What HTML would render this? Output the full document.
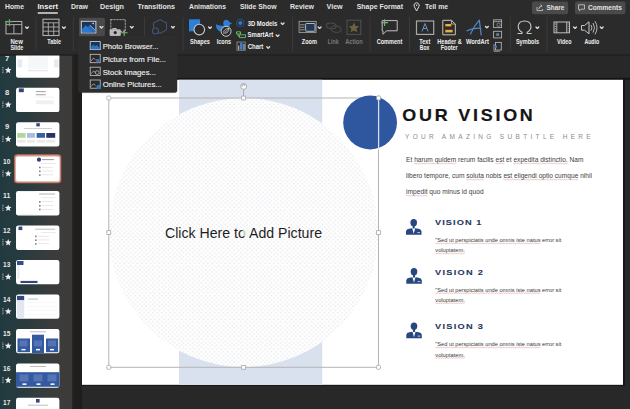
<!DOCTYPE html>
<html><head><meta charset="utf-8">
<style>
*{margin:0;padding:0}
html,body{width:630px;height:409px;overflow:hidden;background:#262626}
svg{position:absolute;left:0;top:0;display:block}
text{font-family:"Liberation Sans",sans-serif}
.tb{font-size:7.8px;font-weight:bold;fill:#e2e2e2}
.lb{font-size:6.4px;font-weight:bold;fill:#f0f0f0}
.mi{font-size:8px;fill:#ececec;stroke:#ececec;stroke-width:0.15px}
.ic{fill:none;stroke:#b4b4b4;stroke-width:1}
.chev{fill:none;stroke:#dedede;stroke-width:1.35;stroke-linecap:round;stroke-linejoin:round}
</style></head><body>
<svg width="630" height="409" viewBox="0 0 630 409">
<defs>
  <linearGradient id="sideg" x1="0" y1="0" x2="1" y2="0">
    <stop offset="0" stop-color="#213a3f"/>
    <stop offset="0.3" stop-color="#283b3e"/>
    <stop offset="0.68" stop-color="#3a3c3c"/>
    <stop offset="1" stop-color="#3d3b39"/>
  </linearGradient>
  <linearGradient id="stripg" x1="0" y1="0" x2="1" y2="0">
    <stop offset="0" stop-color="#262626"/>
    <stop offset="0.3" stop-color="#1f1f1f"/>
    <stop offset="1" stop-color="#1d1d1d"/>
  </linearGradient>
  <pattern id="dots" width="4.4" height="4.3" patternUnits="userSpaceOnUse">
    <rect width="4.4" height="4.3" fill="#ffffff"/>
    <circle cx="1.1" cy="1.07" r="0.8" fill="#e9eaee"/>
    <circle cx="3.3" cy="3.22" r="0.8" fill="#e9eaee"/>
  </pattern>
</defs>

<!-- ===== canvas background ===== -->
<rect x="0" y="0" width="630" height="409" fill="#282828"/>

<!-- ===== slide ===== -->
<rect x="72" y="77.9" width="558" height="1.9" fill="#141414"/>
<rect x="623" y="78" width="1.9" height="308" fill="#161616"/><rect x="82" y="384.8" width="543" height="1.2" fill="#181818"/>
<rect x="82" y="79.8" width="541" height="305" fill="#ffffff"/>
<rect x="179" y="79.8" width="143.2" height="305" fill="#dae1ee"/>
<circle cx="243.6" cy="232.6" r="134.5" fill="url(#dots)"/>
<text x="165" y="238" textLength="157" lengthAdjust="spacingAndGlyphs" style="font-size:14px;fill:#1e1e1e">Click Here to Add Picture</text>
<!-- cursor hint -->
<circle cx="246.5" cy="232.5" r="4.6" fill="#f3f7ec" fill-opacity="0.75"/>
<!-- selection -->
<rect x="108.8" y="98" width="269.7" height="269.3" fill="none" stroke="#b4b4b4" stroke-width="1"/>
<line x1="243.6" y1="89.5" x2="243.6" y2="98" stroke="#9a9a9a" stroke-width="0.8"/>
<circle cx="243.6" cy="86.3" r="3" fill="#ffffff" stroke="#a0a0a0" stroke-width="0.8"/>
<path d="M242.2,86.8 A1.5,1.5 0 1 1 245,86" fill="none" stroke="#606060" stroke-width="0.6"/>
<g fill="#ffffff" stroke="#a8a8a8" stroke-width="0.8">
<rect x="106.8" y="96.0" width="4" height="4" rx="1.2"/>
<rect x="376.5" y="96.0" width="4" height="4" rx="1.2"/>
<rect x="106.8" y="365.3" width="4" height="4" rx="1.2"/>
<rect x="376.5" y="365.3" width="4" height="4" rx="1.2"/>
<rect x="241.7" y="96.1" width="3.8" height="3.8"/>
<rect x="241.7" y="365.4" width="3.8" height="3.8"/>
<rect x="106.9" y="230.7" width="3.8" height="3.8"/>
<rect x="376.6" y="230.7" width="3.8" height="3.8"/>
</g>
<!-- blue circle -->
<circle cx="370.1" cy="122.5" r="26.9" fill="#2f57a0"/>
<line x1="378.6" y1="98" x2="378.6" y2="150" stroke="#d6deee" stroke-width="1.3"/>
<rect x="376.7" y="96.1" width="3.8" height="3.8" rx="0.8" fill="#ffffff" stroke="#a8a8a8" stroke-width="0.7"/>
<!-- title -->
<text transform="translate(402.3,121) scale(1.12,1)" x="0" y="0" textLength="116.5" lengthAdjust="spacing" style="font-size:16px;font-weight:bold;fill:#151515;stroke:#151515;stroke-width:0.2px">OUR VISION</text>
<text x="405" y="139" textLength="189" lengthAdjust="spacingAndGlyphs" style="font-size:6.5px;fill:#8c8c8c;letter-spacing:3.3px">YOUR AMAZING SUBTITLE HERE</text>
<g style="font-size:6.5px;fill:#3c3c3c">
<text x="406.1" y="162.1" textLength="177.3" lengthAdjust="spacingAndGlyphs">Et harum quidem rerum facilis est et expedita distinctio. Nam</text>
<text x="406.1" y="178.2" textLength="185.8" lengthAdjust="spacingAndGlyphs">libero tempore, cum soluta nobis est eligendi optio cumque nihil</text>
<text x="406.1" y="194.3" textLength="77.5" lengthAdjust="spacingAndGlyphs">impedit quo minus id quod</text>
</g>
<!-- vision items -->
<g id="v1">
<ellipse cx="413.7" cy="222.7" rx="3.3" ry="3.7" fill="#27477f"/><rect x="412.7" y="225.5" width="2" height="3" fill="#27477f"/>
<path d="M406,234.7 V231.2 Q406.4,229.2 409,228.8 L412.2,228.2 L413.7,233.8 L415.2,228.2 L418.4,228.8 Q421,229.2 421.5,231.2 V234.7 Z" fill="#27477f"/>
<path d="M417.3,232.6 H420" stroke="#ffffff" stroke-width="0.7"/>
</g>
<text transform="translate(435.0,225.4) scale(1.15,1)" x="0" y="0" textLength="40.4" lengthAdjust="spacing" style="font-size:8px;font-weight:bold;fill:#26375e;stroke:#26375e;stroke-width:0.1px">VISION 1</text>
<g style="font-size:6px;fill:#383838">
<text x="435.3" y="242.2" textLength="126" lengthAdjust="spacingAndGlyphs">"Sed ut perspiciatis unde omnis iste natus error sit</text>
<text x="435.3" y="252.3" textLength="29.5" lengthAdjust="spacingAndGlyphs">voluptatem.</text>
</g>
<g transform="translate(0.3,49)">
<ellipse cx="413.7" cy="222.7" rx="3.3" ry="3.7" fill="#27477f"/><rect x="412.7" y="225.5" width="2" height="3" fill="#27477f"/>
<path d="M406,234.7 V231.2 Q406.4,229.2 409,228.8 L412.2,228.2 L413.7,233.8 L415.2,228.2 L418.4,228.8 Q421,229.2 421.5,231.2 V234.7 Z" fill="#27477f"/>
<path d="M417.3,232.6 H420" stroke="#ffffff" stroke-width="0.7"/>
</g>
<text transform="translate(435.0,275) scale(1.15,1)" x="0" y="0" textLength="41.7" lengthAdjust="spacing" style="font-size:8px;font-weight:bold;fill:#26375e;stroke:#26375e;stroke-width:0.1px">VISION 2</text>
<g style="font-size:6px;fill:#383838">
<text x="435.3" y="292" textLength="126" lengthAdjust="spacingAndGlyphs">"Sed ut perspiciatis unde omnis iste natus error sit</text>
<text x="435.3" y="302" textLength="29.5" lengthAdjust="spacingAndGlyphs">voluptatem.</text>
</g>
<g transform="translate(0.3,103.5)">
<ellipse cx="413.7" cy="222.7" rx="3.3" ry="3.7" fill="#27477f"/><rect x="412.7" y="225.5" width="2" height="3" fill="#27477f"/>
<path d="M406,234.7 V231.2 Q406.4,229.2 409,228.8 L412.2,228.2 L413.7,233.8 L415.2,228.2 L418.4,228.8 Q421,229.2 421.5,231.2 V234.7 Z" fill="#27477f"/>
<path d="M417.3,232.6 H420" stroke="#ffffff" stroke-width="0.7"/>
</g>
<text transform="translate(435.0,329.3) scale(1.15,1)" x="0" y="0" textLength="41.7" lengthAdjust="spacing" style="font-size:8px;font-weight:bold;fill:#26375e;stroke:#26375e;stroke-width:0.1px">VISION 3</text>
<g style="font-size:6px;fill:#383838">
<text x="435.3" y="346.3" textLength="126" lengthAdjust="spacingAndGlyphs">"Sed ut perspiciatis unde omnis iste natus error sit</text>
<text x="435.3" y="356.8" textLength="29.5" lengthAdjust="spacingAndGlyphs">voluptatem.</text>
</g>


<!-- ===== sidebar ===== -->
<rect x="0" y="55.5" width="72" height="354" fill="url(#sideg)"/>
<rect x="72" y="55.5" width="10" height="354" fill="url(#stripg)"/>
<rect x="16" y="53.4" width="43.4" height="24.3" rx="2.2" fill="#ffffff"/>
<text x="5.0" y="60.6" textLength="4.2" lengthAdjust="spacingAndGlyphs" style="font-size:7.7px;font-weight:bold;fill:#e8e8e8">7</text>
<path d="M2.2,67.5 H3.6 M2.2,69.2 H3.6 M2.2,71.0 H3.6 M2.2,72.7 H3.6" stroke="#c8c8c8" stroke-width="0.7"/><path d="M8.20,66.85 L9.13,69.08 L11.53,69.27 L9.70,70.84 L10.26,73.18 L8.20,71.93 L6.14,73.18 L6.70,70.84 L4.87,69.27 L7.27,69.08 Z" fill="#efefef"/>
<rect x="17.5" y="59.4" width="4.5" height="8" fill="#e6eaf3"/>
<rect x="54" y="59.4" width="4.5" height="8" fill="#e6eaf3"/>
<rect x="28" y="56.4" width="20" height="13" fill="#f6f7f9"/>
<rect x="28" y="70.4" width="20" height="0.8" fill="#dadada"/>
<rect x="16" y="87.8" width="43.4" height="24.3" rx="2.2" fill="#ffffff"/>
<text x="5.0" y="95.0" textLength="4.2" lengthAdjust="spacingAndGlyphs" style="font-size:7.7px;font-weight:bold;fill:#e8e8e8">8</text>
<path d="M2.2,101.9 H3.6 M2.2,103.6 H3.6 M2.2,105.4 H3.6 M2.2,107.1 H3.6" stroke="#c8c8c8" stroke-width="0.7"/><path d="M8.20,101.30 L9.13,103.52 L11.53,103.71 L9.70,105.28 L10.26,107.63 L8.20,106.37 L6.14,107.63 L6.70,105.28 L4.87,103.71 L7.27,103.52 Z" fill="#efefef"/>
<rect x="18.8" y="88.4" width="5" height="3.8" fill="#34487e"/>
<rect x="35.8" y="91.3" width="10" height="0.8" fill="#8a8a8a"/>
<rect x="35.8" y="94.4" width="10" height="0.8" fill="#8a8a8a"/>
<rect x="35.8" y="96.8" width="18" height="0.5" fill="#e0e0e0"/>
<rect x="35.8" y="100.3" width="18" height="4" fill="#f0f0f0"/>
<rect x="16" y="122.2" width="43.4" height="24.3" rx="2.2" fill="#ffffff"/>
<text x="5.0" y="129.4" textLength="4.2" lengthAdjust="spacingAndGlyphs" style="font-size:7.7px;font-weight:bold;fill:#e8e8e8">9</text>
<path d="M2.2,136.3 H3.6 M2.2,138.0 H3.6 M2.2,139.8 H3.6 M2.2,141.5 H3.6" stroke="#c8c8c8" stroke-width="0.7"/><path d="M8.20,135.74 L9.13,137.97 L11.53,138.16 L9.70,139.73 L10.26,142.07 L8.20,140.82 L6.14,142.07 L6.70,139.73 L4.87,138.16 L7.27,137.97 Z" fill="#efefef"/>
<rect x="36.3" y="123.2" width="3.5" height="3.2" fill="#34487e"/>
<rect x="24" y="128.4" width="28" height="0.6" fill="#b0b0b0"/>
<rect x="17.2" y="133.0" width="8.4" height="4.8" fill="#b3d69c"/>
<rect x="17.2" y="139.7" width="8.4" height="3" fill="#ececec"/>
<rect x="27" y="133.0" width="8.0" height="4.8" fill="#a8bde3"/>
<rect x="27" y="139.7" width="8.0" height="3" fill="#ececec"/>
<rect x="36.6" y="133.0" width="8.4" height="4.8" fill="#3a60a0"/>
<rect x="36.6" y="139.7" width="8.4" height="3" fill="#ececec"/>
<rect x="46.3" y="133.0" width="8.9" height="4.8" fill="#27336a"/>
<rect x="46.3" y="139.7" width="8.9" height="3" fill="#ececec"/>
<rect x="13.6" y="153.8" width="48.199999999999996" height="29.9" rx="3.8" fill="#4a3430"/>
<rect x="14.1" y="154.3" width="47.199999999999996" height="28.9" rx="3.3" fill="#b77364"/>
<rect x="15.2" y="155.5" width="45.0" height="26.7" rx="2.6" fill="#e4bdb3"/>
<rect x="16" y="156.7" width="43.4" height="24.3" rx="2.2" fill="#ffffff"/>
<text x="3.0" y="163.9" textLength="7.3" lengthAdjust="spacingAndGlyphs" style="font-size:7.7px;font-weight:bold;fill:#e8e8e8">10</text>
<path d="M2.2,170.8 H3.6 M2.2,172.5 H3.6 M2.2,174.3 H3.6 M2.2,176.0 H3.6" stroke="#c8c8c8" stroke-width="0.7"/><path d="M8.20,170.19 L9.13,172.41 L11.53,172.60 L9.70,174.17 L10.26,176.52 L8.20,175.26 L6.14,176.52 L6.70,174.17 L4.87,172.60 L7.27,172.41 Z" fill="#efefef"/>
<circle cx="39" cy="159.7" r="2.1" fill="#2a4078"/>
<rect x="42" y="159.2" width="12" height="0.9" fill="#909090"/>
<rect x="41" y="163.2" width="15" height="0.5" fill="#d4d4d4"/>
<rect x="39" y="166.7" width="1.6" height="1.6" fill="#808080"/>
<rect x="42" y="167.0" width="11" height="0.5" fill="#d0d0d0"/>
<rect x="39" y="170.5" width="1.6" height="1.6" fill="#808080"/>
<rect x="42" y="170.8" width="11" height="0.5" fill="#d0d0d0"/>
<rect x="39" y="174.3" width="1.6" height="1.6" fill="#808080"/>
<rect x="42" y="174.6" width="11" height="0.5" fill="#d0d0d0"/>
<rect x="16" y="191.1" width="43.4" height="24.3" rx="2.2" fill="#ffffff"/>
<text x="3.0" y="198.3" textLength="7.3" lengthAdjust="spacingAndGlyphs" style="font-size:7.7px;font-weight:bold;fill:#e8e8e8">11</text>
<path d="M2.2,205.2 H3.6 M2.2,206.9 H3.6 M2.2,208.7 H3.6 M2.2,210.4 H3.6" stroke="#c8c8c8" stroke-width="0.7"/><path d="M8.20,204.63 L9.13,206.86 L11.53,207.05 L9.70,208.62 L10.26,210.96 L8.20,209.70 L6.14,210.96 L6.70,208.62 L4.87,207.05 L7.27,206.86 Z" fill="#efefef"/>
<rect x="39" y="193.6" width="16" height="0.8" fill="#a0a0a0"/>
<rect x="20" y="191.4" width="16" height="0.6" fill="#e4e8f0"/>
<rect x="20" y="214.5" width="16" height="0.6" fill="#e4e8f0"/>
<rect x="41" y="197.6" width="15" height="0.5" fill="#d4d4d4"/>
<rect x="39" y="201.1" width="1.6" height="1.6" fill="#808080"/>
<rect x="42" y="201.4" width="11" height="0.5" fill="#d0d0d0"/>
<rect x="39" y="204.9" width="1.6" height="1.6" fill="#808080"/>
<rect x="42" y="205.2" width="11" height="0.5" fill="#d0d0d0"/>
<rect x="39" y="208.7" width="1.6" height="1.6" fill="#808080"/>
<rect x="42" y="209.0" width="11" height="0.5" fill="#d0d0d0"/>
<rect x="16" y="225.6" width="43.4" height="24.3" rx="2.2" fill="#ffffff"/>
<text x="3.0" y="232.8" textLength="7.3" lengthAdjust="spacingAndGlyphs" style="font-size:7.7px;font-weight:bold;fill:#e8e8e8">12</text>
<path d="M2.2,239.7 H3.6 M2.2,241.4 H3.6 M2.2,243.2 H3.6 M2.2,244.9 H3.6" stroke="#c8c8c8" stroke-width="0.7"/><path d="M8.20,239.07 L9.13,241.30 L11.53,241.49 L9.70,243.06 L10.26,245.41 L8.20,244.15 L6.14,245.41 L6.70,243.06 L4.87,241.49 L7.27,241.30 Z" fill="#efefef"/>
<rect x="18.5" y="226.6" width="3.8" height="3.5" fill="#34487e"/>
<rect x="35" y="228.8" width="20" height="0.7" fill="#a0a0a0"/>
<rect x="41" y="232.1" width="15" height="0.5" fill="#d4d4d4"/>
<rect x="35" y="235.6" width="1.6" height="1.6" fill="#808080"/>
<rect x="38" y="235.9" width="11" height="0.5" fill="#d0d0d0"/>
<rect x="35" y="239.4" width="1.6" height="1.6" fill="#808080"/>
<rect x="38" y="239.7" width="11" height="0.5" fill="#d0d0d0"/>
<rect x="35" y="243.2" width="1.6" height="1.6" fill="#808080"/>
<rect x="38" y="243.5" width="11" height="0.5" fill="#d0d0d0"/>
<rect x="16" y="260.0" width="43.4" height="24.3" rx="2.2" fill="#ffffff"/>
<text x="3.0" y="267.2" textLength="7.3" lengthAdjust="spacingAndGlyphs" style="font-size:7.7px;font-weight:bold;fill:#e8e8e8">13</text>
<path d="M2.2,274.1 H3.6 M2.2,275.8 H3.6 M2.2,277.6 H3.6 M2.2,279.3 H3.6" stroke="#c8c8c8" stroke-width="0.7"/><path d="M8.20,273.52 L9.13,275.74 L11.53,275.94 L9.70,277.51 L10.26,279.85 L8.20,278.59 L6.14,279.85 L6.70,277.51 L4.87,275.94 L7.27,275.74 Z" fill="#efefef"/>
<rect x="17" y="261.0" width="6.5" height="4" fill="#2f4f92"/>
<rect x="17.5" y="265.0" width="2" height="14" fill="#e8ecf3"/>
<rect x="20.5" y="280.9" width="17" height="2.1" fill="#34457a"/>
<rect x="16" y="294.5" width="43.4" height="24.3" rx="2.2" fill="#ffffff"/>
<text x="3.0" y="301.7" textLength="7.3" lengthAdjust="spacingAndGlyphs" style="font-size:7.7px;font-weight:bold;fill:#e8e8e8">14</text>
<path d="M2.2,308.6 H3.6 M2.2,310.3 H3.6 M2.2,312.1 H3.6 M2.2,313.8 H3.6" stroke="#c8c8c8" stroke-width="0.7"/><path d="M8.20,307.96 L9.13,310.19 L11.53,310.38 L9.70,311.95 L10.26,314.29 L8.20,313.04 L6.14,314.29 L6.70,311.95 L4.87,310.38 L7.27,310.19 Z" fill="#efefef"/>
<rect x="17" y="295.9" width="7.2" height="4.4" fill="#34487e"/>
<rect x="17" y="300.3" width="7.2" height="17.5" fill="#e2e8f2"/>
<rect x="28" y="298.7" width="10" height="0.7" fill="#a0a0a0"/>
<rect x="27" y="302.5" width="30" height="0.4" fill="#eeeeee"/>
<rect x="27" y="306.5" width="30" height="0.4" fill="#eeeeee"/>
<rect x="27" y="310.5" width="30" height="0.4" fill="#eeeeee"/>
<rect x="27" y="314.5" width="30" height="0.4" fill="#eeeeee"/>
<rect x="16" y="328.9" width="43.4" height="24.3" rx="2.2" fill="#ffffff"/>
<text x="3.0" y="336.1" textLength="7.3" lengthAdjust="spacingAndGlyphs" style="font-size:7.7px;font-weight:bold;fill:#e8e8e8">15</text>
<path d="M2.2,343.0 H3.6 M2.2,344.7 H3.6 M2.2,346.5 H3.6 M2.2,348.2 H3.6" stroke="#c8c8c8" stroke-width="0.7"/><path d="M8.20,342.41 L9.13,344.63 L11.53,344.83 L9.70,346.39 L10.26,348.74 L8.20,347.48 L6.14,348.74 L6.70,346.39 L4.87,344.83 L7.27,344.63 Z" fill="#efefef"/>
<rect x="30" y="331.5" width="16" height="0.7" fill="#a0a0a0"/>
<rect x="17.5" y="338.5" width="12.5" height="13.7" fill="#3359a0"/>
<rect x="32" y="334.7" width="12" height="18.4" fill="#3359a0"/>
<rect x="46" y="338.5" width="12.2" height="13.7" fill="#3359a0"/>
<rect x="19.5" y="340.4" width="8" height="6" fill="#5574b4"/>
<rect x="21.5" y="348.9" width="4" height="1.5" fill="#ffffff"/>
<rect x="34" y="340.4" width="8" height="6" fill="#5574b4"/>
<rect x="36" y="348.9" width="4" height="1.5" fill="#ffffff"/>
<rect x="48" y="340.4" width="8" height="6" fill="#5574b4"/>
<rect x="50" y="348.9" width="4" height="1.5" fill="#ffffff"/>
<rect x="16" y="363.4" width="43.4" height="24.3" rx="2.2" fill="#ffffff"/>
<text x="3.0" y="370.6" textLength="7.3" lengthAdjust="spacingAndGlyphs" style="font-size:7.7px;font-weight:bold;fill:#e8e8e8">16</text>
<path d="M2.2,377.5 H3.6 M2.2,379.2 H3.6 M2.2,381.0 H3.6 M2.2,382.7 H3.6" stroke="#c8c8c8" stroke-width="0.7"/><path d="M8.20,376.85 L9.13,379.08 L11.53,379.27 L9.70,380.84 L10.26,383.18 L8.20,381.93 L6.14,383.18 L6.70,380.84 L4.87,379.27 L7.27,379.08 Z" fill="#efefef"/>
<rect x="30" y="366.2" width="16" height="0.7" fill="#a0a0a0"/>
<rect x="16" y="372.2" width="43.4" height="14.6" fill="#3359a0"/>
<rect x="19.5" y="374.4" width="9" height="7" fill="#5574b4"/>
<rect x="22.5" y="383.4" width="4" height="1.5" fill="#ffffff"/>
<rect x="33.5" y="374.4" width="9" height="7" fill="#5574b4"/>
<rect x="36.5" y="383.4" width="4" height="1.5" fill="#ffffff"/>
<rect x="47.5" y="374.4" width="9" height="7" fill="#5574b4"/>
<rect x="50.5" y="383.4" width="4" height="1.5" fill="#ffffff"/>
<rect x="16" y="397.8" width="43.4" height="24.3" rx="2.2" fill="#ffffff"/>
<text x="3.0" y="405.0" textLength="7.3" lengthAdjust="spacingAndGlyphs" style="font-size:7.7px;font-weight:bold;fill:#e8e8e8">17</text>
<path d="M2.2,411.9 H3.6 M2.2,413.6 H3.6 M2.2,415.4 H3.6 M2.2,417.1 H3.6" stroke="#c8c8c8" stroke-width="0.7"/><path d="M8.20,411.30 L9.13,413.52 L11.53,413.71 L9.70,415.28 L10.26,417.63 L8.20,416.37 L6.14,417.63 L6.70,415.28 L4.87,413.71 L7.27,413.52 Z" fill="#efefef"/>
<rect x="36" y="399.0" width="3.6" height="3.6" fill="#34487e"/>
<rect x="28" y="404.8" width="20" height="0.7" fill="#a0a0a0"/>
<!-- ===== ribbon ===== -->
<rect x="0" y="0" width="630" height="55" fill="#2b2b2b"/>
<rect x="0" y="54.5" width="630" height="1" fill="#1b1b1b"/>

<!-- tabs -->
<text class="tb" x="5" y="9" textLength="19" lengthAdjust="spacingAndGlyphs">Home</text>
<text class="tb" x="37.5" y="9" textLength="20.5" lengthAdjust="spacingAndGlyphs" style="fill:#f2f2f2">Insert</text>
<rect x="37.5" y="12.2" width="20.5" height="1.6" rx="0.8" fill="#e0e0e0"/>
<text class="tb" x="71" y="9" textLength="17" lengthAdjust="spacingAndGlyphs">Draw</text>
<text class="tb" x="100" y="9" textLength="24" lengthAdjust="spacingAndGlyphs">Design</text>
<text class="tb" x="137.5" y="9" textLength="37.5" lengthAdjust="spacingAndGlyphs">Transitions</text>
<text class="tb" x="189" y="9" textLength="37" lengthAdjust="spacingAndGlyphs">Animations</text>
<text class="tb" x="240" y="9" textLength="36.5" lengthAdjust="spacingAndGlyphs">Slide Show</text>
<text class="tb" x="290" y="9" textLength="24" lengthAdjust="spacingAndGlyphs">Review</text>
<text class="tb" x="326.5" y="9" textLength="16.2" lengthAdjust="spacingAndGlyphs">View</text>
<text class="tb" x="356.7" y="9" textLength="46.3" lengthAdjust="spacingAndGlyphs">Shape Format</text>
<!-- pin -->
<path d="M416.6,11 L414.4,6.8 A2.6,2.6 0 1 1 418.8,6.8 Z" fill="none" stroke="#d8d8d8" stroke-width="1"/>
<circle cx="416.6" cy="5.3" r="0.8" fill="#d8d8d8"/>
<text class="tb" x="425" y="9" textLength="23" lengthAdjust="spacingAndGlyphs">Tell me</text>

<!-- share / comments -->
<rect x="532" y="1.4" width="36.1" height="12.8" rx="2" fill="#4a4a4a"/>
<path d="M537,7 V10.6 H542.6 V9 M538.8,9.2 Q539,6 541.8,5.8 M540.6,4.6 L542,5.8 L540.6,7" fill="none" stroke="#d0d0d0" stroke-width="0.8"/>
<text class="tb" x="546.6" y="10.2" textLength="17.8" lengthAdjust="spacingAndGlyphs" style="font-size:6.6px">Share</text>
<rect x="575" y="1.4" width="50.4" height="12.8" rx="2" fill="#4a4a4a"/>
<path d="M578.5,4.8 H584.5 V9.2 H581 L579.4,10.8 V9.2 H578.5 Z" fill="none" stroke="#d0d0d0" stroke-width="0.8"/>
<text class="tb" x="587.9" y="10.2" textLength="34" lengthAdjust="spacingAndGlyphs" style="font-size:6.6px">Comments</text>

<!-- separators -->
<g fill="#3a3a3a">
<rect x="35.5" y="17" width="1" height="34"/>
<rect x="72.8" y="17" width="1" height="34"/>
<rect x="144" y="17" width="1" height="34"/>
<rect x="182.5" y="17" width="1" height="34"/>
<rect x="292" y="17" width="1" height="34"/>
<rect x="369.5" y="17" width="1" height="34"/>
<rect x="409" y="17" width="1" height="34"/>
<rect x="509.8" y="17" width="1" height="34"/>
<rect x="546.5" y="17" width="1" height="34"/>
</g>

<!-- New Slide icon -->
<rect x="6" y="21.5" width="15.8" height="12.3" fill="#262626" stroke="#a8a8a8" stroke-width="1.1"/>
<line x1="6" y1="24.6" x2="21.8" y2="24.6" stroke="#a8a8a8" stroke-width="1"/>
<line x1="13.9" y1="24.6" x2="13.9" y2="33.8" stroke="#a8a8a8" stroke-width="1"/>
<path d="M9.4,19 V26.2 M5.2,21.8 H12.8" stroke="#5fae5f" stroke-width="1.1"/>
<path class="chev" d="M25.6,27 L27,28.4 L28.4,27"/>
<!-- Table icon -->
<rect x="43" y="19.2" width="16" height="16.3" fill="#262626" stroke="#b0b0b0" stroke-width="1.1"/>
<path d="M43,22.8 H59 M43,27 H59 M43,31.2 H59 M48.3,22.8 V35.5 M53.7,22.8 V35.5" stroke="#b0b0b0" stroke-width="0.9"/>
<path class="chev" d="M62.5,27 L63.9,28.4 L65.3,27"/>
<text class="lb" x="10.5" y="44" textLength="12.3" lengthAdjust="spacingAndGlyphs">New</text>
<text class="lb" x="10.5" y="50" textLength="12.8" lengthAdjust="spacingAndGlyphs">Slide</text>
<text class="lb" x="47.2" y="44" textLength="13.9" lengthAdjust="spacingAndGlyphs">Table</text>

<!-- Pictures (highlighted) -->
<rect x="79" y="17.8" width="25.9" height="18.6" rx="1.5" fill="#4a4a4a"/>
<rect x="81.3" y="21.3" width="14.6" height="11.6" fill="#1e3552" stroke="#d4dce8" stroke-width="0.9"/>
<path d="M81.8,32.4 V29.6 L85.8,25.2 L93.5,32.4 Z" fill="#2a78d2"/>
<path d="M87.5,27 L89.8,25.2 L95.4,30.2 V32.4 H93.5 Z" fill="#2a6cbc"/>
<path d="M89.8,25.2 L95.4,30.2" fill="none" stroke="#a8c8ea" stroke-width="0.7"/>
<path d="M91.6,23.2 L93.6,22.4 L94.4,24.6 Z" fill="#d8d0c0"/>
<path class="chev" d="M100,26.6 L101.4,28 L102.8,26.6"/>
<!-- Screenshot -->
<rect x="110.8" y="19.6" width="14.5" height="11.8" fill="none" stroke="#a8a8a8" stroke-width="1" stroke-dasharray="1.4,1.6" stroke-linecap="round"/>
<rect x="109.6" y="29.2" width="11.2" height="6.8" rx="1" fill="#b8b8b8"/>
<rect x="112.4" y="28" width="4.2" height="1.6" fill="#b8b8b8"/>
<circle cx="115.2" cy="32.6" r="1.9" fill="#1e1e1e" stroke="#e0e0e0" stroke-width="0.5"/>
<path d="M124.2,29.4 V36.2 M120.8,32.8 H127.6" stroke="#79b879" stroke-width="1.1"/>
<path class="chev" d="M130.4,26.6 L131.8,28 L133.2,26.6"/>
<!-- hexagon dim -->
<path d="M160,19.5 L166.5,23 L166.5,30 L160,33.5 L153.5,30 L153.5,23 Z" fill="none" stroke="#3e5678" stroke-width="1.1"/>
<circle cx="155.5" cy="31" r="3" fill="#2b2b2b" stroke="#3e5678" stroke-width="1.1"/>
<path class="chev" d="M171.5,26.6 L172.9,28 L174.3,26.6"/>

<!-- Shapes -->
<rect x="189" y="19.3" width="11.1" height="12" fill="#2d7fd8"/>
<circle cx="199.3" cy="29.6" r="5.3" fill="#2b2b2b" stroke="#c8c8c8" stroke-width="1.1"/>
<path class="chev" d="M208.6,27 L210,28.4 L211.4,27"/>
<text class="lb" x="190" y="44" textLength="20" lengthAdjust="spacingAndGlyphs">Shapes</text>
<!-- Icons -->
<path d="M215.8,24.2 Q216.3,31.7 222.5,31.7 Q227.5,31.7 229.2,27.3 Q229.8,25.8 229.6,24.8 L232.2,23.3 L229.6,22.3 Q228.8,19.7 226.3,19.7 Q223.3,19.9 223.2,23 Q223.2,24.6 224,25.8 Q220,26.2 215.8,24.2 Z" fill="#2d7fd8"/>
<circle cx="226.1" cy="31.3" r="5" fill="#2b2b2b" stroke="#c8c8c8" stroke-width="1"/>
<path d="M222.8,34.6 L229,28.4 M223.5,32.5 Q224,28.8 229,28.4 Q228.8,33 225,33.2" fill="none" stroke="#c8c8c8" stroke-width="0.8"/>
<text class="lb" x="216.8" y="44" textLength="14.2" lengthAdjust="spacingAndGlyphs">Icons</text>
<!-- 3D models / SmartArt / Chart -->
<circle cx="240.3" cy="23" r="3.8" fill="#1a2b44" stroke="#34557f" stroke-width="0.9"/>
<path d="M240.3,20.8 L242.2,21.9 L242.2,24.1 L240.3,25.2 L238.4,24.1 L238.4,21.9 Z" fill="#3f74b8"/>
<text class="lb" x="247.7" y="25.5" textLength="29.5" lengthAdjust="spacingAndGlyphs">3D Models</text>
<path class="chev" d="M281.2,23 L282.6,24.4 L284,23"/>
<path d="M236.5,31.8 H240.5 V34 H236.5 Z M239.5,34.8 H245.5 V37.6 H239.5 Z" fill="#2b2b2b" stroke="#6cbf6c" stroke-width="0.9"/>
<path d="M238,34 V36.2 H239.5" fill="none" stroke="#6cbf6c" stroke-width="0.8"/>
<text class="lb" x="247.6" y="37.4" textLength="25.7" lengthAdjust="spacingAndGlyphs">SmartArt</text>
<path class="chev" d="M276.2,35 L277.6,36.4 L279,35"/>
<rect x="237" y="42" width="8.2" height="8.2" fill="none" stroke="#9a9a9a" stroke-width="0.8"/>
<rect x="240" y="42.8" width="2.6" height="6.8" fill="#3f7fd0"/>
<rect x="238" y="45.5" width="1.3" height="4.2" fill="#a8a8a8"/>
<rect x="243.3" y="44" width="1.3" height="5.7" fill="#a8a8a8"/>
<text class="lb" x="247.7" y="49" textLength="15.7" lengthAdjust="spacingAndGlyphs">Chart</text>
<path class="chev" d="M266.8,46.8 L268.2,48.2 L269.6,46.8"/>

<!-- Zoom -->
<rect x="299.1" y="21.4" width="17" height="11" fill="#2b2b2b" stroke="#a0a0a0" stroke-width="0.9"/>
<rect x="305.6" y="23.5" width="9.4" height="7.8" rx="0.8" fill="#24384f" stroke="#b4c8e2" stroke-width="0.9"/>
<rect x="300" y="24.2" width="4.6" height="1.1" fill="#8a8a8a"/>
<rect x="300" y="26.7" width="4.6" height="1.1" fill="#8a8a8a"/>
<rect x="300" y="29.2" width="4.6" height="1.1" fill="#8a8a8a"/>
<path class="chev" d="M318.2,27 L319.6,28.4 L321,27"/>
<text class="lb" x="301.8" y="44" textLength="15.2" lengthAdjust="spacingAndGlyphs">Zoom</text>
<!-- Link dim -->
<g fill="none" stroke="#4e4e4e" stroke-width="1">
<ellipse cx="331.2" cy="25.8" rx="5" ry="2.8" transform="rotate(8 331.2 25.8)"/>
<ellipse cx="336" cy="29.1" rx="5.2" ry="3.2" transform="rotate(8 336 29.1)"/>
</g>
<text class="lb" x="327.7" y="44" textLength="10.9" lengthAdjust="spacingAndGlyphs" style="fill:#7a7a7a">Link</text>
<!-- Action dim -->
<rect x="347" y="20.2" width="13.8" height="14.2" fill="none" stroke="#505050" stroke-width="1"/>
<path d="M353.9,22.6 L355.5,26 L359.1,26.3 L356.4,28.7 L357.2,32.2 L353.9,30.4 L350.6,32.2 L351.4,28.7 L348.7,26.3 L352.3,26 Z" fill="#6e6040"/>
<text class="lb" x="345.2" y="44" textLength="17.6" lengthAdjust="spacingAndGlyphs" style="fill:#7a7a7a">Action</text>

<!-- Comment -->
<path d="M382.2,20.6 H397.2 V30.8 H386.5 L383,34.3 V30.8 H382.2 Z" fill="none" stroke="#c0c0c0" stroke-width="1"/>
<path d="M384.6,19.2 V26 M381.2,22.6 H388" stroke="#72b872" stroke-width="1.1"/>
<text class="lb" x="376.7" y="44" textLength="25.7" lengthAdjust="spacingAndGlyphs">Comment</text>

<!-- Text Box -->
<rect x="416.5" y="21" width="17.2" height="13.4" fill="#2a2a2a" stroke="#a8a8a8" stroke-width="1.2"/>
<path d="M422,31.5 L425,23.5 L428,31.5 M423.2,28.5 H426.8" fill="none" stroke="#6a94cc" stroke-width="1"/>
<text class="lb" x="419.3" y="44" textLength="11" lengthAdjust="spacingAndGlyphs">Text</text>
<text class="lb" x="419.8" y="50.3" textLength="9.6" lengthAdjust="spacingAndGlyphs">Box</text>
<!-- Header & Footer -->
<path d="M442.8,20.3 H451.5 L455.3,24 V34.8 H442.8 Z" fill="#2a2a2a" stroke="#cfc6b6" stroke-width="1"/>
<path d="M451.5,20.3 V24 H455.3" fill="none" stroke="#cfc6b6" stroke-width="0.8"/>
<rect x="445.3" y="24" width="6" height="2.4" fill="#e8ad48"/>
<rect x="445.3" y="29.8" width="7.3" height="2.6" fill="#e8ad48"/>
<text class="lb" x="437.3" y="44" textLength="24.4" lengthAdjust="spacingAndGlyphs">Header &amp;</text>
<text class="lb" x="440.8" y="50.3" textLength="16.9" lengthAdjust="spacingAndGlyphs">Footer</text>
<!-- WordArt -->
<path d="M470.5,34 Q474,26 479.3,20.2 L481.2,34.8 M467,30.8 Q473,27.6 480.8,28.3" fill="none" stroke="#5288cc" stroke-width="1.2" stroke-linecap="round" stroke-linejoin="round"/>
<path class="chev" d="M485.5,26.4 L486.9,27.8 L488.3,26.4"/>
<text class="lb" x="466" y="44" textLength="22.8" lengthAdjust="spacingAndGlyphs">WordArt</text>
<!-- small column icons -->
<rect x="493.6" y="19.8" width="8" height="7.8" fill="#2b2b2b" stroke="#b0b0b0" stroke-width="0.9"/>
<path d="M493.6,21.6 H501.6" stroke="#b0b0b0" stroke-width="0.8"/>
<circle cx="498.6" cy="24.8" r="1.7" fill="none" stroke="#8aa0c0" stroke-width="0.7"/>
<rect x="493.6" y="31.3" width="8" height="6.6" fill="#2b2b2b" stroke="#b0b0b0" stroke-width="0.9"/>
<rect x="496.3" y="33.4" width="2.8" height="2.4" fill="#6a88b0"/>
<rect x="495.5" y="42.4" width="5.8" height="7.6" fill="#2b2b2b" stroke="#b0b0b0" stroke-width="0.9"/>
<path d="M494,44.2 V51.3 H499.8" fill="none" stroke="#b0b0b0" stroke-width="0.8"/>
<rect x="494.4" y="45.6" width="2.6" height="2.2" fill="#3f74b8"/>

<!-- Symbols -->
<path d="M517.5,33.5 H522 V32.3 Q518.2,30.2 518.2,26.5 Q518.5,21 524.6,21 Q530.7,21 531,26.5 Q531,30.2 527.2,32.3 V33.5 H531.7" fill="none" stroke="#c8c8c8" stroke-width="1.1"/>
<path class="chev" d="M536,27 L537.4,28.4 L538.8,27"/>
<text class="lb" x="515.9" y="44.2" textLength="23.2" lengthAdjust="spacingAndGlyphs">Symbols</text>
<!-- Video -->
<rect x="554" y="22" width="15.5" height="10.8" fill="#2b2b2b" stroke="#c0c0c0" stroke-width="1"/>
<path d="M556.8,22 V32.8 M566.7,22 V32.8" stroke="#c0c0c0" stroke-width="0.9"/>
<path d="M554.8,24 H556 M554.8,26.4 H556 M554.8,28.8 H556 M554.8,31 H556 M567.5,24 H568.7 M567.5,26.4 H568.7 M567.5,28.8 H568.7 M567.5,31 H568.7" stroke="#c0c0c0" stroke-width="0.8"/>
<path class="chev" d="M573.6,27 L575,28.4 L576.4,27"/>
<text class="lb" x="557" y="44.2" textLength="14.5" lengthAdjust="spacingAndGlyphs">Video</text>
<!-- Audio -->
<path d="M581.5,25.5 H584.5 L589,21.8 V33.8 L584.5,30.2 H581.5 Z" fill="none" stroke="#c8c8c8" stroke-width="1"/>
<path d="M591,25 Q592.8,27.8 591,30.6 M593,23 Q596,27.8 593,32.6 M595,21.2 Q599,27.8 595,34.4" fill="none" stroke="#c8c8c8" stroke-width="0.9"/>
<path class="chev" d="M600.3,27 L601.7,28.4 L603.1,27"/>
<text class="lb" x="584.4" y="44.2" textLength="14.8" lengthAdjust="spacingAndGlyphs">Audio</text>

<path d="M414.1,163.15 L415.0,163.85 L415.9,163.15 L416.8,163.85 L417.7,163.15 L418.6,163.85 L419.5,163.15 L420.4,163.85 L421.3,163.15 L422.2,163.85 L423.1,163.15 L424.0,163.85 L424.9,163.15 L425.8,163.85 L426.7,163.15 L427.6,163.85 L428.5,163.15 L429.4,163.85 L430.3,163.15 L431.2,163.85 L432.1,163.15 L433.0,163.85 L433.9,163.15 L434.8,163.85 L435.7,163.15 L436.6,163.85 L437.5,163.15 L438.4,163.85 L439.3,163.15 L440.2,163.85 L441.1,163.15 L442.0,163.85 L442.9,163.15 L443.8,163.85 L444.7,163.15 L445.6,163.85 L446.5,163.15 L447.4,163.85 L448.3,163.15 L449.2,163.85 L450.1,163.15 L451.0,163.85 L451.9,163.15 L452.8,163.85 L453.7,163.15 L454.6,163.85 L455.5,163.15 L456.3,163.50 M495.5,163.15 L496.4,163.85 L497.3,163.15 L498.2,163.85 L499.1,163.15 L500.0,163.85 L500.9,163.15 L501.8,163.85 L502.7,163.15 L503.6,163.85 L504.3,163.50 M513.4,163.15 L514.3,163.85 L515.2,163.15 L516.1,163.85 L517.0,163.15 L517.9,163.85 L518.8,163.15 L519.7,163.85 L520.6,163.15 L521.5,163.85 L522.4,163.15 L523.3,163.85 L524.2,163.15 L525.1,163.85 L526.0,163.15 L526.9,163.85 L527.8,163.15 L528.7,163.85 L529.6,163.15 L530.5,163.85 L531.4,163.15 L532.3,163.85 L533.2,163.15 L534.1,163.85 L535.0,163.15 L535.9,163.85 L536.8,163.15 L537.7,163.85 L538.6,163.15 L539.5,163.85 L540.4,163.15 L541.3,163.85 L542.2,163.15 L543.1,163.85 L544.0,163.15 L544.9,163.85 L545.8,163.15 L546.7,163.85 L547.6,163.15 L548.5,163.85 L549.4,163.15 L550.3,163.85 L551.2,163.15 L552.1,163.85 L553.0,163.15 L553.9,163.85 L554.8,163.15 L555.7,163.85 L556.6,163.15 L557.5,163.85 L558.4,163.15 L559.3,163.85 L560.2,163.15 L561.1,163.85 L562.0,163.15 L562.9,163.85 L563.8,163.15 L564.7,163.85 L565.6,163.15 L566.5,163.85 L567.4,163.15 L567.7,163.50 M466.3,179.25 L467.2,179.95 L468.1,179.25 L469.0,179.95 L469.9,179.25 L470.8,179.95 L471.7,179.25 L472.6,179.95 L473.5,179.25 L474.4,179.95 L475.3,179.25 L476.2,179.95 L477.1,179.25 L478.0,179.95 L478.9,179.25 L479.8,179.95 L480.7,179.25 L481.6,179.95 L482.5,179.25 L483.4,179.95 L483.9,179.60 M503.4,179.25 L504.3,179.95 L505.2,179.25 L506.1,179.95 L507.0,179.25 L507.9,179.95 L508.8,179.25 L509.7,179.95 L510.6,179.25 L511.5,179.95 L512.4,179.25 L513.3,179.95 L514.2,179.25 L515.1,179.95 L516.0,179.25 L516.9,179.95 L517.8,179.25 L518.7,179.95 L519.6,179.25 L520.5,179.95 L521.4,179.25 L522.3,179.95 L523.2,179.25 L524.1,179.95 L525.0,179.25 L525.9,179.95 L526.8,179.25 L527.7,179.95 L528.6,179.25 L529.5,179.95 L530.4,179.25 L531.3,179.95 L532.2,179.25 L533.1,179.95 L534.0,179.25 L534.9,179.95 L535.8,179.25 L536.7,179.95 L537.6,179.25 L538.5,179.95 L539.4,179.25 L540.3,179.95 L541.2,179.25 L542.1,179.95 L543.0,179.25 L543.9,179.95 L544.8,179.25 L545.7,179.95 L546.6,179.25 L547.5,179.95 L548.4,179.25 L549.3,179.95 L550.2,179.25 L551.1,179.95 L552.0,179.25 L552.9,179.95 L553.8,179.25 L554.7,179.95 L555.6,179.25 L556.5,179.95 L557.4,179.25 L558.3,179.95 L559.2,179.25 L560.1,179.95 L561.0,179.25 L561.9,179.95 L562.8,179.25 L563.7,179.95 L564.6,179.25 L565.5,179.95 L566.4,179.25 L567.3,179.95 L568.2,179.25 L569.1,179.95 L570.0,179.25 L570.9,179.95 L571.8,179.25 L572.7,179.95 L573.6,179.25 L574.5,179.95 L575.4,179.25 L576.3,179.95 L577.2,179.25 L578.1,179.95 L578.3,179.60 M406.1,195.35 L407.0,196.05 L407.9,195.35 L408.8,196.05 L409.7,195.35 L410.6,196.05 L411.5,195.35 L412.4,196.05 L413.3,195.35 L414.2,196.05 L415.1,195.35 L416.0,196.05 L416.9,195.35 L417.8,196.05 L418.7,195.35 L419.6,196.05 L420.5,195.35 L421.4,196.05 L422.3,195.35 L423.2,196.05 L424.1,195.35 L425.0,196.05 L425.9,195.35 L426.8,196.05 L427.5,195.70 M435.3,243.05 L436.2,243.75 L437.1,243.05 L438.0,243.75 L438.9,243.05 L439.8,243.75 L440.7,243.05 L441.6,243.75 L442.5,243.05 L443.4,243.75 L444.3,243.05 L445.2,243.75 L446.1,243.05 L447.0,243.75 L447.9,243.05 L448.8,243.75 L449.7,243.05 L450.6,243.75 L451.5,243.05 L452.4,243.75 L453.3,243.05 L454.2,243.75 L455.1,243.05 L456.0,243.75 L456.9,243.05 L457.8,243.75 L458.7,243.05 L459.6,243.75 L460.5,243.05 L461.4,243.75 L462.3,243.05 L463.2,243.75 L464.1,243.05 L465.0,243.75 L465.9,243.05 L466.8,243.75 L467.7,243.05 L468.6,243.75 L469.5,243.05 L470.4,243.75 L471.3,243.05 L472.2,243.75 L473.1,243.05 L474.0,243.75 L474.9,243.05 L475.8,243.75 L476.7,243.05 L477.6,243.75 L478.5,243.05 L479.4,243.75 L480.3,243.05 L481.2,243.75 L482.1,243.05 L483.0,243.75 L483.9,243.05 L484.8,243.75 L485.7,243.05 L486.6,243.75 L487.5,243.05 L488.4,243.75 L489.3,243.05 L490.2,243.75 L491.1,243.05 L492.0,243.75 L492.9,243.05 L493.8,243.75 L494.7,243.05 L495.6,243.75 L496.5,243.05 L497.4,243.75 L498.3,243.05 L499.2,243.75 L500.1,243.05 L501.0,243.75 L501.9,243.05 L502.8,243.75 L503.7,243.05 L504.6,243.75 L505.5,243.05 L506.4,243.75 L507.3,243.05 L508.2,243.75 L509.1,243.05 L510.0,243.75 L510.9,243.05 L511.8,243.75 L512.7,243.05 L513.6,243.75 L514.5,243.05 L515.4,243.75 L516.3,243.05 L517.2,243.75 L518.1,243.05 L519.0,243.75 L519.9,243.05 L520.8,243.75 L521.7,243.05 L522.6,243.75 L523.5,243.05 L524.4,243.75 L525.3,243.05 L526.2,243.75 L527.1,243.05 L528.0,243.75 L528.9,243.05 L529.8,243.75 L530.7,243.05 L531.6,243.75 L532.5,243.05 L533.4,243.75 L534.3,243.05 L535.2,243.75 L536.1,243.05 L537.0,243.75 L537.9,243.05 L538.8,243.75 L539.7,243.05 L540.5,243.40 M435.3,253.15 L436.2,253.85 L437.1,253.15 L438.0,253.85 L438.9,253.15 L439.8,253.85 L440.7,253.15 L441.6,253.85 L442.5,253.15 L443.4,253.85 L444.3,253.15 L445.2,253.85 L446.1,253.15 L447.0,253.85 L447.9,253.15 L448.8,253.85 L449.7,253.15 L450.6,253.85 L451.5,253.15 L452.4,253.85 L453.3,253.15 L454.2,253.85 L455.1,253.15 L456.0,253.85 L456.9,253.15 L457.8,253.85 L458.7,253.15 L459.6,253.85 L460.5,253.15 L461.4,253.85 L462.3,253.15 L463.2,253.85 L464.1,253.15 L464.8,253.50 M435.3,292.85 L436.2,293.55 L437.1,292.85 L438.0,293.55 L438.9,292.85 L439.8,293.55 L440.7,292.85 L441.6,293.55 L442.5,292.85 L443.4,293.55 L444.3,292.85 L445.2,293.55 L446.1,292.85 L447.0,293.55 L447.9,292.85 L448.8,293.55 L449.7,292.85 L450.6,293.55 L451.5,292.85 L452.4,293.55 L453.3,292.85 L454.2,293.55 L455.1,292.85 L456.0,293.55 L456.9,292.85 L457.8,293.55 L458.7,292.85 L459.6,293.55 L460.5,292.85 L461.4,293.55 L462.3,292.85 L463.2,293.55 L464.1,292.85 L465.0,293.55 L465.9,292.85 L466.8,293.55 L467.7,292.85 L468.6,293.55 L469.5,292.85 L470.4,293.55 L471.3,292.85 L472.2,293.55 L473.1,292.85 L474.0,293.55 L474.9,292.85 L475.8,293.55 L476.7,292.85 L477.6,293.55 L478.5,292.85 L479.4,293.55 L480.3,292.85 L481.2,293.55 L482.1,292.85 L483.0,293.55 L483.9,292.85 L484.8,293.55 L485.7,292.85 L486.6,293.55 L487.5,292.85 L488.4,293.55 L489.3,292.85 L490.2,293.55 L491.1,292.85 L492.0,293.55 L492.9,292.85 L493.8,293.55 L494.7,292.85 L495.6,293.55 L496.5,292.85 L497.4,293.55 L498.3,292.85 L499.2,293.55 L500.1,292.85 L501.0,293.55 L501.9,292.85 L502.8,293.55 L503.7,292.85 L504.6,293.55 L505.5,292.85 L506.4,293.55 L507.3,292.85 L508.2,293.55 L509.1,292.85 L510.0,293.55 L510.9,292.85 L511.8,293.55 L512.7,292.85 L513.6,293.55 L514.5,292.85 L515.4,293.55 L516.3,292.85 L517.2,293.55 L518.1,292.85 L519.0,293.55 L519.9,292.85 L520.8,293.55 L521.7,292.85 L522.6,293.55 L523.5,292.85 L524.4,293.55 L525.3,292.85 L526.2,293.55 L527.1,292.85 L528.0,293.55 L528.9,292.85 L529.8,293.55 L530.7,292.85 L531.6,293.55 L532.5,292.85 L533.4,293.55 L534.3,292.85 L535.2,293.55 L536.1,292.85 L537.0,293.55 L537.9,292.85 L538.8,293.55 L539.7,292.85 L540.5,293.20 M435.3,302.85 L436.2,303.55 L437.1,302.85 L438.0,303.55 L438.9,302.85 L439.8,303.55 L440.7,302.85 L441.6,303.55 L442.5,302.85 L443.4,303.55 L444.3,302.85 L445.2,303.55 L446.1,302.85 L447.0,303.55 L447.9,302.85 L448.8,303.55 L449.7,302.85 L450.6,303.55 L451.5,302.85 L452.4,303.55 L453.3,302.85 L454.2,303.55 L455.1,302.85 L456.0,303.55 L456.9,302.85 L457.8,303.55 L458.7,302.85 L459.6,303.55 L460.5,302.85 L461.4,303.55 L462.3,302.85 L463.2,303.55 L464.1,302.85 L464.8,303.20 M435.3,347.15 L436.2,347.85 L437.1,347.15 L438.0,347.85 L438.9,347.15 L439.8,347.85 L440.7,347.15 L441.6,347.85 L442.5,347.15 L443.4,347.85 L444.3,347.15 L445.2,347.85 L446.1,347.15 L447.0,347.85 L447.9,347.15 L448.8,347.85 L449.7,347.15 L450.6,347.85 L451.5,347.15 L452.4,347.85 L453.3,347.15 L454.2,347.85 L455.1,347.15 L456.0,347.85 L456.9,347.15 L457.8,347.85 L458.7,347.15 L459.6,347.85 L460.5,347.15 L461.4,347.85 L462.3,347.15 L463.2,347.85 L464.1,347.15 L465.0,347.85 L465.9,347.15 L466.8,347.85 L467.7,347.15 L468.6,347.85 L469.5,347.15 L470.4,347.85 L471.3,347.15 L472.2,347.85 L473.1,347.15 L474.0,347.85 L474.9,347.15 L475.8,347.85 L476.7,347.15 L477.6,347.85 L478.5,347.15 L479.4,347.85 L480.3,347.15 L481.2,347.85 L482.1,347.15 L483.0,347.85 L483.9,347.15 L484.8,347.85 L485.7,347.15 L486.6,347.85 L487.5,347.15 L488.4,347.85 L489.3,347.15 L490.2,347.85 L491.1,347.15 L492.0,347.85 L492.9,347.15 L493.8,347.85 L494.7,347.15 L495.6,347.85 L496.5,347.15 L497.4,347.85 L498.3,347.15 L499.2,347.85 L500.1,347.15 L501.0,347.85 L501.9,347.15 L502.8,347.85 L503.7,347.15 L504.6,347.85 L505.5,347.15 L506.4,347.85 L507.3,347.15 L508.2,347.85 L509.1,347.15 L510.0,347.85 L510.9,347.15 L511.8,347.85 L512.7,347.15 L513.6,347.85 L514.5,347.15 L515.4,347.85 L516.3,347.15 L517.2,347.85 L518.1,347.15 L519.0,347.85 L519.9,347.15 L520.8,347.85 L521.7,347.15 L522.6,347.85 L523.5,347.15 L524.4,347.85 L525.3,347.15 L526.2,347.85 L527.1,347.15 L528.0,347.85 L528.9,347.15 L529.8,347.85 L530.7,347.15 L531.6,347.85 L532.5,347.15 L533.4,347.85 L534.3,347.15 L535.2,347.85 L536.1,347.15 L537.0,347.85 L537.9,347.15 L538.8,347.85 L539.7,347.15 L540.5,347.50 M435.3,357.65 L436.2,358.35 L437.1,357.65 L438.0,358.35 L438.9,357.65 L439.8,358.35 L440.7,357.65 L441.6,358.35 L442.5,357.65 L443.4,358.35 L444.3,357.65 L445.2,358.35 L446.1,357.65 L447.0,358.35 L447.9,357.65 L448.8,358.35 L449.7,357.65 L450.6,358.35 L451.5,357.65 L452.4,358.35 L453.3,357.65 L454.2,358.35 L455.1,357.65 L456.0,358.35 L456.9,357.65 L457.8,358.35 L458.7,357.65 L459.6,358.35 L460.5,357.65 L461.4,358.35 L462.3,357.65 L463.2,358.35 L464.1,357.65 L464.8,358.00" fill="none" stroke="#dc949a" stroke-width="0.55"/>
<!-- ===== dropdown menu ===== -->
<path d="M78.5,36.4 H177 V90.6 Q177,92.6 175,92.6 H80.5 Q78.5,92.6 78.5,90.6 Z" fill="#2d2d2d" stroke="#333333" stroke-width="0.5"/>
<!-- photo browser icon -->
<rect x="90.2" y="41.6" width="10" height="8" fill="#1e3552" stroke="#d8e2f0" stroke-width="0.8"/>
<path d="M90.6,49.2 V47.5 L93.5,44.6 L97.5,49.2 Z M95,46.3 L96.6,45 L99.8,48 V49.2 H97.5 Z" fill="#2a74c8"/>
<!-- picture from file icon -->
<rect x="90.2" y="54.3" width="10" height="8.4" fill="#2a2a2a" stroke="#c8c8c8" stroke-width="0.8"/>
<path d="M91,61 L93.5,58 L95.5,59.8" fill="none" stroke="#c8c8c8" stroke-width="0.7"/>
<rect x="96.2" y="59" width="3.2" height="3.4" fill="#3f6fa8"/>
<!-- stock images -->
<rect x="90.2" y="67.2" width="10" height="8.2" fill="#2a2a2a" stroke="#c8c8c8" stroke-width="0.8"/>
<path d="M91,73.8 L93.5,71 L95.5,72.5" fill="none" stroke="#c8c8c8" stroke-width="0.7"/>
<circle cx="97.2" cy="72.6" r="1.9" fill="none" stroke="#c8c8c8" stroke-width="0.7"/>
<!-- online pictures -->
<rect x="90.2" y="80" width="10" height="8.2" fill="#2a2a2a" stroke="#c8c8c8" stroke-width="0.8"/>
<path d="M91,86.5 L93.5,83.8 L95.5,85.3" fill="none" stroke="#c8c8c8" stroke-width="0.7"/>
<circle cx="98.6" cy="87" r="2.3" fill="#3a74b8"/>
<text class="mi" x="102.7" y="48.9" textLength="55.8" lengthAdjust="spacingAndGlyphs">Photo Browser...</text>
<text class="mi" x="102.7" y="61.7" textLength="63.3" lengthAdjust="spacingAndGlyphs">Picture from File...</text>
<text class="mi" x="102.7" y="74.5" textLength="53.3" lengthAdjust="spacingAndGlyphs">Stock Images...</text>
<text class="mi" x="102.7" y="87.2" textLength="59.1" lengthAdjust="spacingAndGlyphs">Online Pictures...</text>

</svg>
</body></html>
